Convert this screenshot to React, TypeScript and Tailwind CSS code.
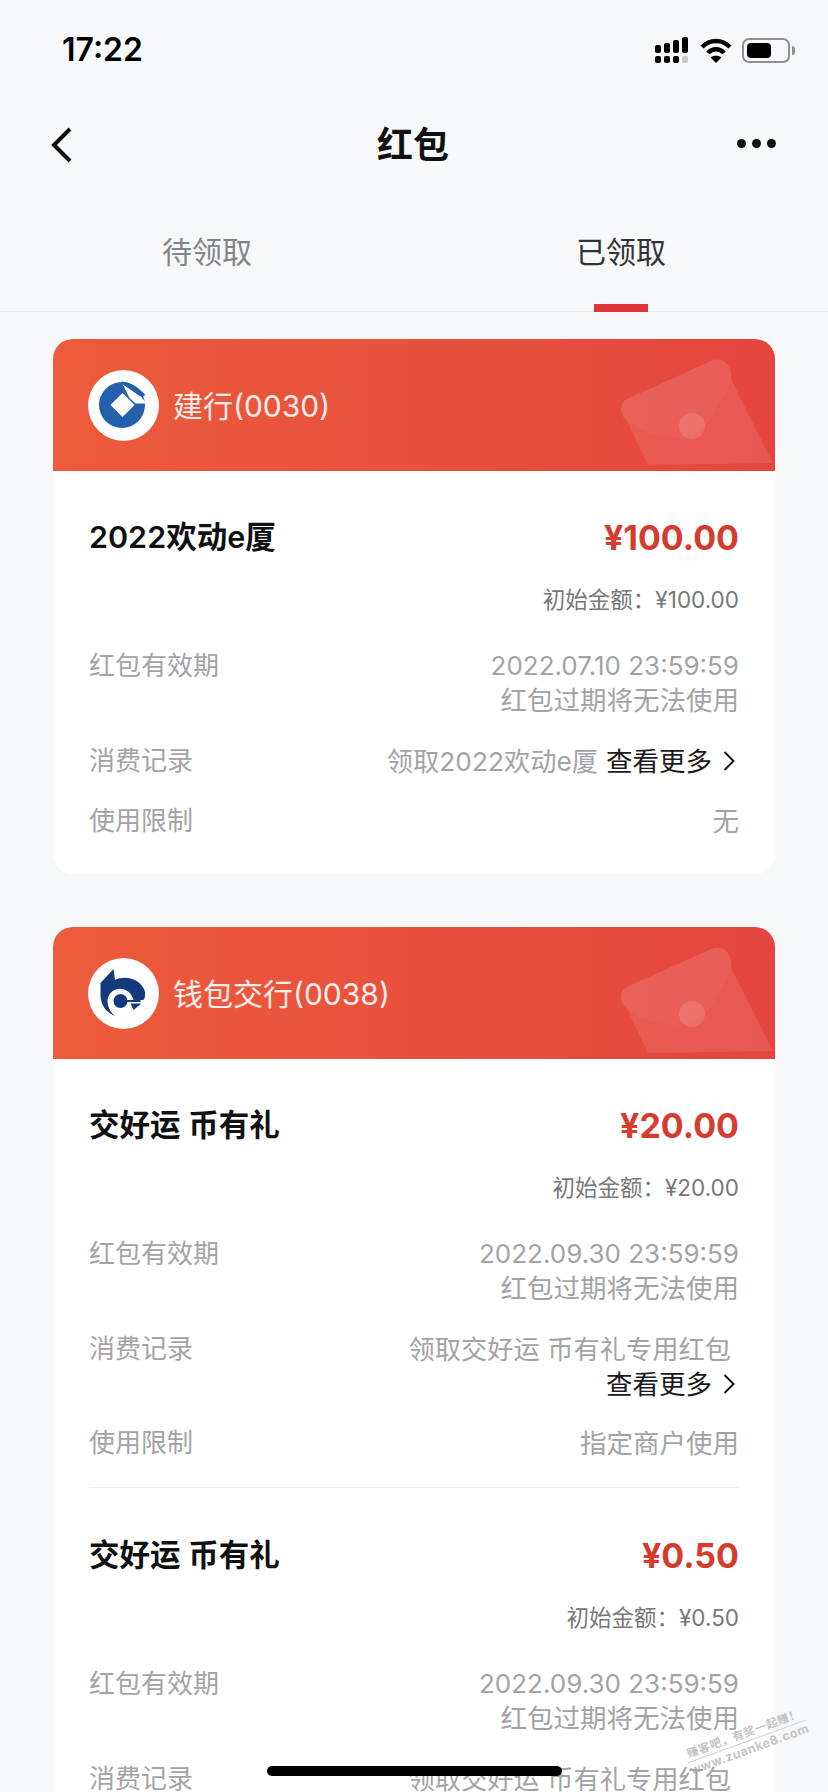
const FONT = "font-['Inter','Noto_Sans_CJK_SC',sans-serif]";

const Envelope = () => (
  <svg className="absolute right-0 top-0" width="160" height="132" viewBox="0 0 160 132" fill="none">
    <path d="M33 126 L12 82 C24 92 44 98 62 98 C90 98 98 76 106 62 C110 55 114 48 116 40 L158 124 Z" fill="#ffffff" fillOpacity="0.1" />
    <path
      d="M12 60 L96 22 C104 18 112 22 115 30 C119 40 113 50 106 62 C98 76 90 98 62 98 C44 98 24 92 12 82 C4 76 4 64 12 60 Z"
      fill="#ffffff"
      fillOpacity="0.13"
    />
    <circle cx="77" cy="87" r="13" fill="#ffffff" fillOpacity="0.13" />
  </svg>
);

const CcbLogo = () => (
  <svg width="71" height="71" viewBox="8.5 8 71 71">
    <circle cx="44" cy="43.5" r="35.5" fill="#ffffff" />
    <circle cx="42.5" cy="43" r="23" fill="#2460ab" />
    <path d="M43 31 L55 43 L43 55 L31 43 Z" fill="#ffffff" />
    <path d="M43 22 L62 35 L67 41.5 L56 41.5 L50 36 Z" fill="#ffffff" />
    <path d="M42 19.5 C50 20 60 26 66 33 L62 35 L43 22 Z" fill="#2460ab" />
  </svg>
);

const BocomLogo = () => (
  <svg width="71" height="71" viewBox="8.5 8 71 71">
    <circle cx="44" cy="43.5" r="35.5" fill="#ffffff" />
    <path
      d="M21 33 L34 19 L35.5 30 C45 25 60 28 65 40 C66 44 66 47 64 50 L54 50 C51 36 31 34 28 50 C28 57 31 63 36 66 C27 63 21 55 21 45 Z"
      fill="#143a7e"
    />
    <circle cx="41" cy="51" r="7" fill="#143a7e" />
    <rect x="41" y="50" width="20" height="2" fill="#143a7e" />
    <path d="M51 53.5 L62 53.5 L54 60 Z" fill="#143a7e" />
  </svg>
);

const StatusIcons = () => (
  <div className="flex items-center">
    <svg width="34" height="26" viewBox="0 0 34 26" fill="#000000">
      <rect x="0" y="8" width="6" height="8" rx="2" />
      <rect x="9" y="6" width="6" height="10" rx="2" />
      <rect x="18" y="3" width="6" height="13" rx="2" />
      <rect x="27" y="0" width="6" height="16" rx="2" />
      <rect x="0" y="19" width="6" height="7" rx="2" />
      <rect x="9" y="19" width="6" height="7" rx="2" />
      <rect x="18" y="19" width="6" height="7" rx="2" />
      <rect x="27" y="19" width="6" height="7" rx="2" fill="#c8c8ca" />
    </svg>
    <svg className="ml-[11px] mr-[10px]" width="32" height="25" viewBox="0 0 32 25" fill="none" stroke="#000000" strokeWidth="4.4">
      <path d="M2 9 C10 1 22 1 30 9" />
      <path d="M8 15 C12 10 20 10 24 15" />
      <path d="M16 25 L10.5 19.5 C13 17 19 17 21.5 19.5 Z" fill="#000000" stroke="none" />
    </svg>
    <div className="flex items-center gap-[2px]">
      <div className="w-[48px] h-[25px] rounded-[7px] border-2 border-[#8f8f91] p-[3px]">
        <div className="w-[24px] h-full rounded-[4px] bg-black" />
      </div>
      <div className="w-[3px] h-[9px] rounded-r-full bg-[#8f8f91]" />
    </div>
  </div>
);

const Chevron = ({ className }: { className: string }) => (
  <svg className={className} viewBox="0 0 12 20" fill="none" stroke="currentColor" strokeWidth="2">
    <path d="M1.5 1 L10.5 10 L1.5 19" />
  </svg>
);

type EntryProps = {
  title: string;
  amount: string;
  initial: string;
  expire: string;
  record: string;
  limit: string;
};

const Row = ({ label, children, className }: { label: string; children: React.ReactNode; className: string }) => (
  <div className={`flex justify-between ${className}`}>
    <span className="text-[26px] text-[#a3a3a5]">{label}</span>
    <div className="w-[420px] text-right text-[#a3a3a5]">{children}</div>
  </div>
);

const Entry = ({ title, amount, initial, expire, record, limit }: EntryProps) => (
  <div className="text-[26.5px] leading-[34px]">
    <div className="flex items-center justify-between h-[40px]">
      <span className="-mt-[2px] text-[30.5px] font-semibold text-[#111111]">{title}</span>
      <span className="text-[34px] font-bold text-[#d63c2e]">{amount}</span>
    </div>
    <div className="mt-[26px] text-right text-[22.5px] leading-[32px] text-[#77777a]">初始金额：{initial}</div>
    <Row label="红包有效期" className="mt-[33px]">
      <div className="text-[26px]">{expire}</div>
      <div>红包过期将无法使用</div>
    </Row>
    <Row label="消费记录" className="mt-[27px]">
      <span className="pr-2 text-[26.25px]">{record}</span>
      <span className="inline-flex items-center text-[#1a1a1a] whitespace-nowrap">
        查看更多
        <Chevron className="w-[12px] h-[20px] ml-[11px] mr-[4px]" />
      </span>
    </Row>
    <Row label="使用限制" className="mt-[25px]">
      {limit}
    </Row>
  </div>
);

const Card = ({ bank, logo, entries }: { bank: string; logo: React.ReactNode; entries: EntryProps[] }) => (
  <div className="rounded-[20px] bg-white overflow-hidden">
    <div className="relative flex items-center h-[132px] pl-[35px] gap-[14px] bg-gradient-to-r from-[#ec5b3a] to-[#e5453f] text-[30px] text-white/90">
      {logo}
      <span className="mt-[2px]">{bank}</span>
      <Envelope />
    </div>
    <div className="px-[36px] pt-[47px] pb-[36px]">
      {entries.map((entry, i) => (
        <div key={i}>
          {i > 0 && <div className="h-px bg-[#ececee] mt-[27px] mb-[48px]" />}
          <Entry {...entry} />
        </div>
      ))}
    </div>
  </div>
);

export default function App() {
  return (
    <div className={`relative w-[828px] h-[1792px] overflow-hidden bg-[#f7f8fa] ${FONT}`}>
      <div className="flex items-center justify-between h-[100px] pl-[62px] pr-[33px]">
        <span className="text-[32px] font-semibold text-black">17:22</span>
        <StatusIcons />
      </div>

      <div className="grid grid-cols-3 items-center h-[90px] pl-[50px] pr-[52px]">
        <svg width="22" height="36" viewBox="0 0 22 36" fill="none" stroke="#111111" strokeWidth="4">
          <path d="M20 2 L4 18 L20 34" />
        </svg>
        <span className="justify-self-center text-[36px] font-semibold text-[#111111]">红包</span>
        <div className="-mt-[3px] justify-self-end flex gap-[6px]">
          <span className="w-[9px] h-[9px] rounded-full bg-[#111111]" />
          <span className="w-[9px] h-[9px] rounded-full bg-[#111111]" />
          <span className="w-[9px] h-[9px] rounded-full bg-[#111111]" />
        </div>
      </div>

      <div className="grid grid-cols-2 h-[122px] border-b border-[#ebebed] text-[30px]">
        <div className="flex items-center justify-center pt-[3px] text-[#848486]">待领取</div>
        <div className="relative flex items-center justify-center pt-[3px] text-[#333335]">
          已领取
          <div className="absolute bottom-[-1px] left-1/2 -translate-x-1/2 w-[54px] h-[8px] bg-[#de3636]" />
        </div>
      </div>

      <div className="flex flex-col gap-[53px] px-[53px] pt-[27px]">
        <Card
          bank="建行(0030)"
          logo={<CcbLogo />}
          entries={[
            {
              title: "2022欢动e厦",
              amount: "¥100.00",
              initial: "¥100.00",
              expire: "2022.07.10 23:59:59",
              record: "领取2022欢动e厦",
              limit: "无",
            },
          ]}
        />
        <Card
          bank="钱包交行(0038)"
          logo={<BocomLogo />}
          entries={[
            {
              title: "交好运 币有礼",
              amount: "¥20.00",
              initial: "¥20.00",
              expire: "2022.09.30 23:59:59",
              record: "领取交好运 币有礼专用红包",
              limit: "指定商户使用",
            },
            {
              title: "交好运 币有礼",
              amount: "¥0.50",
              initial: "¥0.50",
              expire: "2022.09.30 23:59:59",
              record: "领取交好运 币有礼专用红包",
              limit: "指定商户使用",
            },
          ]}
        />
      </div>

      <div className="absolute left-[267px] top-[1766px] w-[295px] h-[10px] rounded-full bg-black" />

      <div className="absolute left-[684px] top-[1726px] -rotate-[20deg] text-center text-[#a8a8aa]/70 font-bold">
        <div className="text-[11.5px] leading-[15px] border-b border-[#cfcfd1] tracking-[0.5px]">赚客吧，有奖一起赚！</div>
        <div className="text-[12.5px] leading-[15px] tracking-[0.5px]">www.zuanke8.com</div>
      </div>
    </div>
  );
}
